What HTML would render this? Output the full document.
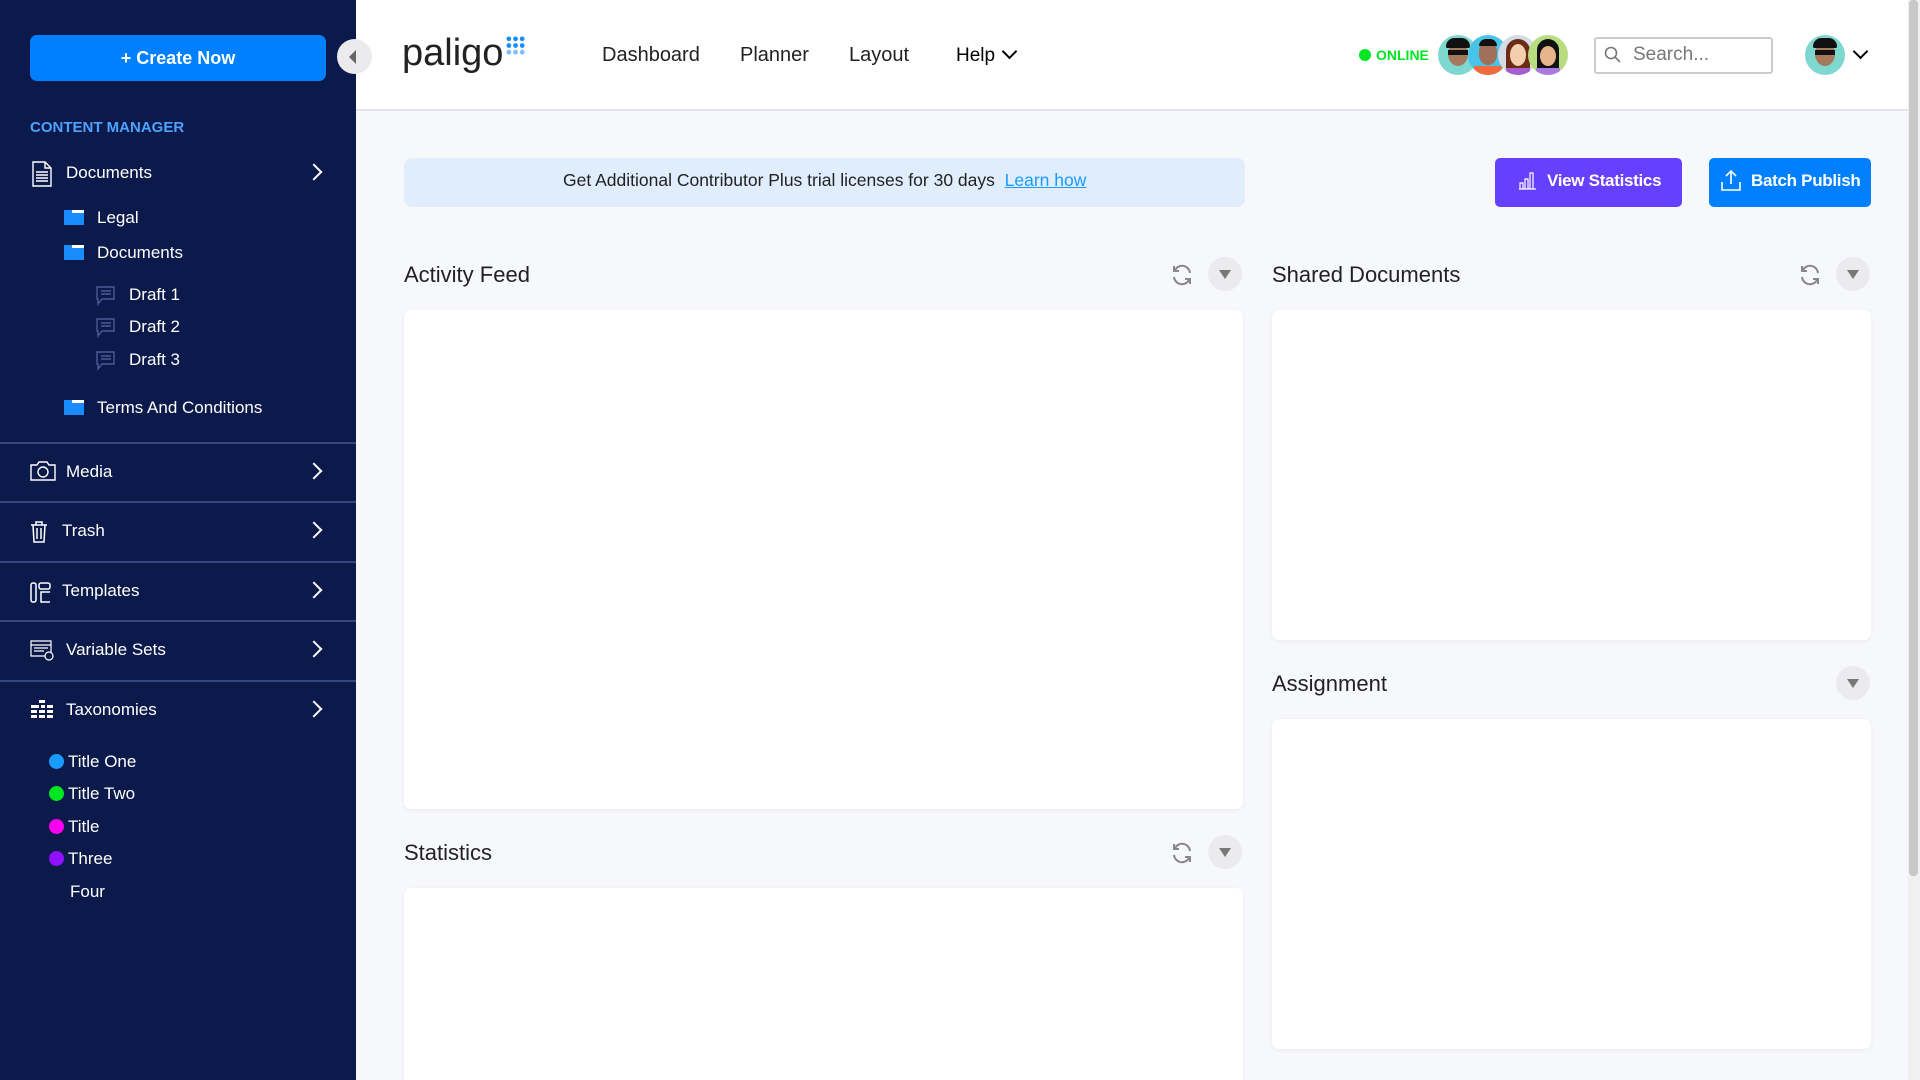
<!DOCTYPE html>
<html><head><meta charset="utf-8"><style>
*{margin:0;padding:0;box-sizing:border-box}
html,body{overflow:hidden}
body{width:1920px;height:1080px;background:#f7f8fc;font-family:"Liberation Sans",Arial,sans-serif;position:relative}
.a{position:absolute;white-space:nowrap}
#sb{position:absolute;left:0;top:0;width:356px;height:1080px;background:#0b1a4b;color:#fff}
.sbt{position:absolute;font-size:17px;color:#fff;line-height:20px}
.div{position:absolute;left:0;width:356px;height:2px;background:#34467f}
.chev{position:absolute;left:308px;width:12px;height:12px;border-right:2.5px solid #fff;border-top:2.5px solid #fff;transform:rotate(45deg)}
.fold{position:absolute;left:64px;width:20px;height:15px;background:#1a8cff;border-top:3px solid #fff}
.fold:before{content:"";position:absolute;left:0;top:-3px;width:8px;height:3px;background:#1a8cff}
.dot{position:absolute;left:49px;width:15px;height:15px;border-radius:50%}
.card{position:absolute;background:#fff;border-radius:7px;box-shadow:0 1px 4px rgba(0,0,0,.06)}
.ttl{position:absolute;font-size:22px;color:#222}
.dd{position:absolute;width:34px;height:34px;border-radius:50%;background:#ebebee}
.dd:after{content:"";position:absolute;left:11px;top:13px;border-left:6px solid transparent;border-right:6px solid transparent;border-top:9px solid #777}
.av{position:absolute;width:40px;height:40px;border-radius:50%;overflow:hidden}
</style></head><body>
<div id="sb">
 <div class="a" style="left:30px;top:35px;width:296px;height:46px;background:#0080ff;border-radius:7px;font-weight:bold;font-size:18px;text-align:center;line-height:46px">+ Create Now</div>
 <div class="a" style="left:30px;top:119px;font-size:15px;font-weight:bold;color:#4da3ff">CONTENT MANAGER</div>
 <svg class="a" style="left:31px;top:161px" width="22" height="26" viewBox="0 0 22 26" fill="none" stroke="#fff" stroke-width="1.4"><path d="M2 1h12l6 6v18H2z M14 1v6h6 M5 11h12 M5 14h12 M5 17h12 M5 20h12"/></svg>
 <div class="sbt" style="left:66px;top:163px">Documents</div><div class="chev" style="top:166px"></div>
 <div class="fold" style="top:210px"></div><div class="sbt" style="left:97px;top:208px">Legal</div>
 <div class="fold" style="top:245px"></div><div class="sbt" style="left:97px;top:243px">Documents</div>
 <svg class="a" style="left:96px;top:286px" width="20" height="20" viewBox="0 0 20 20" fill="none" stroke="#4a5a94" stroke-width="1.4"><path d="M1 1h17v12H6l-4 5v-5H1z M5 5h10 M5 8h10"/></svg><div class="sbt" style="left:129px;top:285px">Draft 1</div>
 <svg class="a" style="left:96px;top:318px" width="20" height="20" viewBox="0 0 20 20" fill="none" stroke="#4a5a94" stroke-width="1.4"><path d="M1 1h17v12H6l-4 5v-5H1z M5 5h10 M5 8h10"/></svg><div class="sbt" style="left:129px;top:317px">Draft 2</div>
 <svg class="a" style="left:96px;top:351px" width="20" height="20" viewBox="0 0 20 20" fill="none" stroke="#4a5a94" stroke-width="1.4"><path d="M1 1h17v12H6l-4 5v-5H1z M5 5h10 M5 8h10"/></svg><div class="sbt" style="left:129px;top:350px">Draft 3</div>
 <div class="fold" style="top:400px"></div><div class="sbt" style="left:97px;top:398px">Terms And Conditions</div>
 <div class="div" style="top:442px"></div>
 <svg class="a" style="left:30px;top:461px" width="26" height="20" viewBox="0 0 26 20" fill="none" stroke="#fff" stroke-width="1.4"><path d="M1 4h6l2-3h8l2 3h6v15H1z"/><circle cx="13" cy="11" r="5"/></svg>
 <div class="sbt" style="left:66px;top:462px">Media</div><div class="chev" style="top:465px"></div>
 <div class="div" style="top:501px"></div>
 <svg class="a" style="left:30px;top:521px" width="18" height="22" viewBox="0 0 18 22" fill="none" stroke="#fff" stroke-width="1.5"><path d="M1 4h16 M6 4V1h6v3 M3 4l1 17h10l1-17 M7 7v11 M11 7v11"/></svg>
 <div class="sbt" style="left:62px;top:521px">Trash</div><div class="chev" style="top:524px"></div>
 <div class="div" style="top:561px"></div>
 <svg class="a" style="left:30px;top:582px" width="21" height="21" viewBox="0 0 21 21" fill="none" stroke="#fff" stroke-width="1.5"><rect x="1" y="1" width="5" height="19" rx="2"/><rect x="9" y="1" width="11" height="6" rx="2"/><path d="M20 10h-9v10h9"/></svg>
 <div class="sbt" style="left:62px;top:581px">Templates</div><div class="chev" style="top:584px"></div>
 <div class="div" style="top:620px"></div>
 <svg class="a" style="left:30px;top:639px" width="25" height="22" viewBox="0 0 25 22" fill="none" stroke="#fff" stroke-width="1.2"><path d="M1 2h20v15H1z M1 6h20 M4 9h14 M4 12h10"/><circle cx="19" cy="17" r="4" fill="#0b1a4b"/></svg>
 <div class="sbt" style="left:66px;top:640px">Variable Sets</div><div class="chev" style="top:643px"></div>
 <div class="div" style="top:680px"></div>
 <svg class="a" style="left:31px;top:700px" width="22" height="18" viewBox="0 0 22 18" fill="#fff"><rect x="8" y="0" width="6" height="3"/><rect x="0" y="5" width="8" height="3"/><rect x="10" y="5" width="4" height="3"/><rect x="16" y="5" width="6" height="3"/><rect x="0" y="10" width="6" height="3"/><rect x="8" y="10" width="6" height="3"/><rect x="16" y="10" width="6" height="3"/><rect x="0" y="15" width="6" height="3"/><rect x="8" y="15" width="6" height="3"/><rect x="16" y="15" width="6" height="3"/></svg>
 <div class="sbt" style="left:66px;top:700px">Taxonomies</div><div class="chev" style="top:703px"></div>
 <div class="dot" style="top:754px;background:#1a9bff"></div><div class="sbt" style="left:68px;top:752px">Title One</div>
 <div class="dot" style="top:786px;background:#00e620"></div><div class="sbt" style="left:68px;top:784px">Title Two</div>
 <div class="dot" style="top:819px;background:#ff00ee"></div><div class="sbt" style="left:68px;top:817px">Title</div>
 <div class="dot" style="top:851px;background:#9010ff"></div><div class="sbt" style="left:68px;top:849px">Three</div>
 <div class="sbt" style="left:70px;top:882px">Four</div>
</div>
<!-- header -->
<div class="a" style="left:356px;top:0;width:1552px;height:111px;background:#fff;border-bottom:2px solid #e2e4ea"></div>
<div class="a" style="left:337px;top:39px;width:35px;height:35px;border-radius:50%;background:#ebebee"></div>
<div class="a" style="left:349px;top:50px;border-top:7px solid transparent;border-bottom:7px solid transparent;border-right:7px solid #666"></div>
<div class="a" style="left:402px;top:32px;font-size:38px;color:#222">paligo</div>
<svg class="a" style="left:506px;top:36px" width="20" height="20" viewBox="0 0 21 21"><g fill="#1a8cff"><circle cx="3" cy="3" r="2.5"/><circle cx="10" cy="3" r="2.5"/><circle cx="17" cy="3" r="2.5"/><circle cx="3" cy="10" r="2.5"/><circle cx="10" cy="10" r="2.5"/><circle cx="17" cy="10" r="2.5"/></g><g fill="#7cbcff"><circle cx="3" cy="17" r="2.5"/><circle cx="10" cy="17" r="2.5"/><circle cx="17" cy="17" r="2.5"/></g></svg>
<div class="a" style="left:602px;top:44px;font-size:20px;color:#222">Dashboard</div>
<div class="a" style="left:740px;top:44px;font-size:20px;color:#222">Planner</div>
<div class="a" style="left:849px;top:44px;font-size:20px;color:#222">Layout</div>
<div class="a" style="left:956px;top:45px;font-size:19px;color:#000">Help</div>
<div class="a" style="left:1004px;top:46px;width:11px;height:11px;border-right:2.5px solid #000;border-bottom:2.5px solid #000;transform:rotate(45deg)"></div>
<div class="a" style="left:1359px;top:49px;width:12px;height:12px;border-radius:50%;background:#00e620"></div>
<div class="a" style="left:1376px;top:47px;font-size:14px;font-weight:bold;color:#00e620">ONLINE</div>
<div class="av" style="left:1438px;top:35px;background:#7fd8d0"><div class="a" style="left:10px;top:7px;width:20px;height:24px;border-radius:50%;background:#a57a5c"></div><div class="a" style="left:8px;top:3px;width:24px;height:10px;border-radius:10px 10px 2px 2px;background:#111"></div><div class="a" style="left:10px;top:15px;width:20px;height:5px;background:#111"></div></div>
<div class="av" style="left:1468px;top:35px;background:#4ac3e8"><div class="a" style="left:11px;top:6px;width:18px;height:24px;border-radius:45%;background:#a0705a"></div><div class="a" style="left:11px;top:4px;width:18px;height:7px;border-radius:8px 8px 0 0;background:#111"></div><div class="a" style="left:6px;top:31px;width:28px;height:12px;background:#f06a3c"></div></div>
<div class="av" style="left:1498px;top:35px;background:#d4dde6"><div class="a" style="left:8px;top:4px;width:24px;height:34px;border-radius:12px 12px 4px 4px;background:#6b2c15"></div><div class="a" style="left:12px;top:9px;width:16px;height:22px;border-radius:50%;background:#f3cfb0"></div><div class="a" style="left:8px;top:33px;width:24px;height:10px;background:#a45ed0"></div></div>
<div class="av" style="left:1528px;top:35px;background:#b8dc80"><div class="a" style="left:9px;top:4px;width:22px;height:32px;border-radius:12px 12px 3px 3px;background:#111"></div><div class="a" style="left:12px;top:11px;width:16px;height:20px;border-radius:50%;background:#e8b48a"></div><div class="a" style="left:8px;top:33px;width:24px;height:10px;background:#a97ae0"></div></div>
<div class="a" style="left:1594px;top:37px;width:179px;height:37px;border:2px solid #ccc;border-radius:3px;background:#fff"></div>
<svg class="a" style="left:1604px;top:46px" width="18" height="18" viewBox="0 0 18 18" fill="none" stroke="#777" stroke-width="1.6"><circle cx="7" cy="7" r="5.5"/><path d="M11 11l5 5"/></svg>
<div class="a" style="left:1633px;top:44px;font-size:19px;color:#777">Search...</div>
<div class="av" style="left:1805px;top:35px;background:#7fd8d0"><div class="a" style="left:10px;top:7px;width:20px;height:24px;border-radius:50%;background:#a57a5c"></div><div class="a" style="left:8px;top:3px;width:24px;height:10px;border-radius:10px 10px 2px 2px;background:#111"></div><div class="a" style="left:10px;top:15px;width:20px;height:5px;background:#111"></div></div>
<div class="a" style="left:1855px;top:46px;width:11px;height:11px;border-right:2.5px solid #000;border-bottom:2.5px solid #000;transform:rotate(45deg)"></div>
<div class="a" style="left:1908px;top:0;width:12px;height:1080px;background:#f0f0f0"></div>
<div class="a" style="left:1909px;top:0;width:9px;height:876px;background:#c8c8c8;border-radius:4px"></div>
<!-- banner -->
<div class="a" style="left:404px;top:158px;width:841px;height:49px;background:#e0edfc;border-radius:8px"></div>
<div class="a" style="left:563px;top:170px;font-size:17.5px;color:#222">Get Additional Contributor Plus trial licenses for 30 days&nbsp; <span style="color:#1a9bff;text-decoration:underline">Learn how</span></div>
<div class="a" style="left:1495px;top:158px;width:187px;height:49px;background:#6640ff;border-radius:5px"></div>
<svg class="a" style="left:1518px;top:170px" width="19" height="20" viewBox="0 0 19 20" fill="none" stroke="#fff" stroke-width="1.2"><path d="M1 19h17 M2 19v-6h3v6 M7 19V9h3v10 M12 19V3h3v16"/></svg>
<div class="a" style="left:1547px;top:171px;font-size:17px;font-weight:bold;color:#fff;letter-spacing:-0.3px">View Statistics</div>
<div class="a" style="left:1709px;top:158px;width:162px;height:49px;background:#0080ff;border-radius:5px"></div>
<svg class="a" style="left:1721px;top:169px" width="20" height="22" viewBox="0 0 20 22" fill="none" stroke="#fff" stroke-width="1.6"><path d="M10 15V2 M5 7l5-5 5 5 M1 13v8h18v-8"/></svg>
<div class="a" style="left:1751px;top:171px;font-size:17px;font-weight:bold;color:#fff;letter-spacing:-0.3px">Batch Publish</div>
<!-- panels -->
<div class="ttl" style="left:404px;top:262px">Activity Feed</div>
<svg class="a" style="left:1170px;top:263px" width="24" height="24" viewBox="0 0 24 24" fill="none" stroke="#888" stroke-width="2"><path d="M20 10a8 8 0 0 0-15-3 M4 14a8 8 0 0 0 15 3 M4 3v5h5 M20 21v-5h-5"/></svg>
<div class="dd" style="left:1208px;top:257px"></div>
<div class="card" style="left:404px;top:310px;width:839px;height:499px"></div>
<div class="ttl" style="left:404px;top:840px">Statistics</div>
<svg class="a" style="left:1170px;top:841px" width="24" height="24" viewBox="0 0 24 24" fill="none" stroke="#888" stroke-width="2"><path d="M20 10a8 8 0 0 0-15-3 M4 14a8 8 0 0 0 15 3 M4 3v5h5 M20 21v-5h-5"/></svg>
<div class="dd" style="left:1208px;top:835px"></div>
<div class="card" style="left:404px;top:888px;width:839px;height:192px;border-radius:7px 7px 0 0"></div>
<div class="ttl" style="left:1272px;top:262px">Shared Documents</div>
<svg class="a" style="left:1798px;top:263px" width="24" height="24" viewBox="0 0 24 24" fill="none" stroke="#888" stroke-width="2"><path d="M20 10a8 8 0 0 0-15-3 M4 14a8 8 0 0 0 15 3 M4 3v5h5 M20 21v-5h-5"/></svg>
<div class="dd" style="left:1836px;top:257px"></div>
<div class="card" style="left:1272px;top:310px;width:599px;height:330px"></div>
<div class="ttl" style="left:1272px;top:671px">Assignment</div>
<div class="dd" style="left:1836px;top:666px"></div>
<div class="card" style="left:1272px;top:719px;width:599px;height:330px"></div>
</body></html>
